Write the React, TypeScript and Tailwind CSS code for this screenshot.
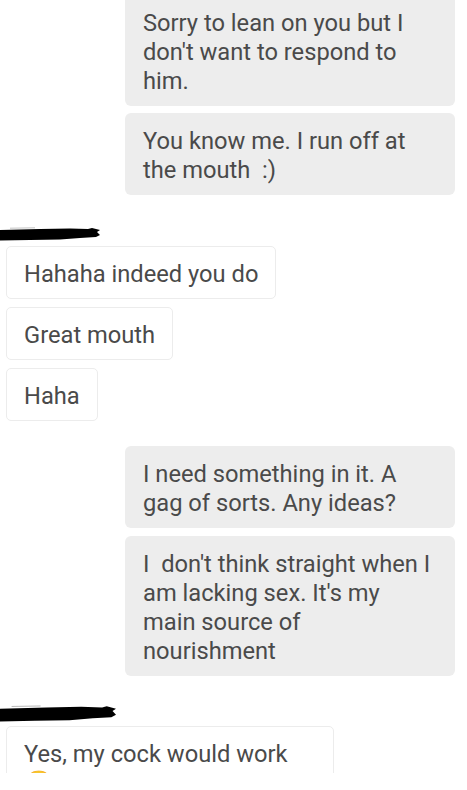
import React from "react";

const textCls = "text-[23.7px] leading-[29px] text-[#4a4a4a]";

function Right({ children, className = "" }: { children: React.ReactNode; className?: string }) {
  return (
    <div className="flex justify-end pr-[12px]">
      <div className={`w-[330px] rounded-[6px] bg-[#ededed] px-[18px] pt-[14px] pb-[10px] ${textCls} ${className}`}>
        {children}
      </div>
    </div>
  );
}

function Left({ children, className = "" }: { children: React.ReactNode; className?: string }) {
  return (
    <div className="flex justify-start pl-[6px]">
      <div className={`rounded-[5px] border border-[#ececec] bg-white px-[17px] pt-[13px] pb-[9px] ${textCls} ${className}`}>
        {children}
      </div>
    </div>
  );
}

function Redact({ w, h }: { w: number; h: number }) {
  return (
    <svg width={w} height={h} viewBox="0 0 100 14" preserveAspectRatio="none" className="block">
      <path d="M0 3 L40 2 L70 1.5 L88 2 L92 1 L100 3 L97 5 L100 8 L96 10 L80 11 L60 12.5 L30 13 L0 13.5 Z" fill="#000" />
      <path d="M10 1.2 L35 0.8" stroke="#888" strokeWidth="0.5" />
    </svg>
  );
}

export default function App() {
  return (
    <div className="w-[467px] h-[790px] bg-white overflow-hidden" style={{ fontFamily: "Roboto, 'Noto Sans', sans-serif" }}>
      <div className="h-[773px] overflow-hidden flex flex-col">
        <div className="mt-[-5px] flex flex-col gap-[7px]">
          <Right>Sorry to lean on you but I don't want to respond to him.</Right>
          <Right>You know me. I run off at the mouth&nbsp; :)</Right>
        </div>
        <div className="mt-[32px]">
          <Redact w={100} h={14} />
        </div>
        <div className="mt-[5px] flex flex-col gap-[8px]">
          <Left>Hahaha indeed you do</Left>
          <Left>Great mouth</Left>
          <Left>Haha</Left>
        </div>
        <div className="mt-[25px] flex flex-col gap-[8px]">
          <Right>I need something in it. A gag of sorts. Any ideas?</Right>
          <Right>I&nbsp; don't think straight when I am lacking sex. It's my main source of nourishment</Right>
        </div>
        <div className="mt-[29px]">
          <Redact w={116} h={17} />
        </div>
        <div className="mt-[4px] flex flex-col">
          <Left className="w-[328px]">
            Yes, my cock would work
            <br />
            <span>😉</span>
          </Left>
        </div>
      </div>
    </div>
  );
}
